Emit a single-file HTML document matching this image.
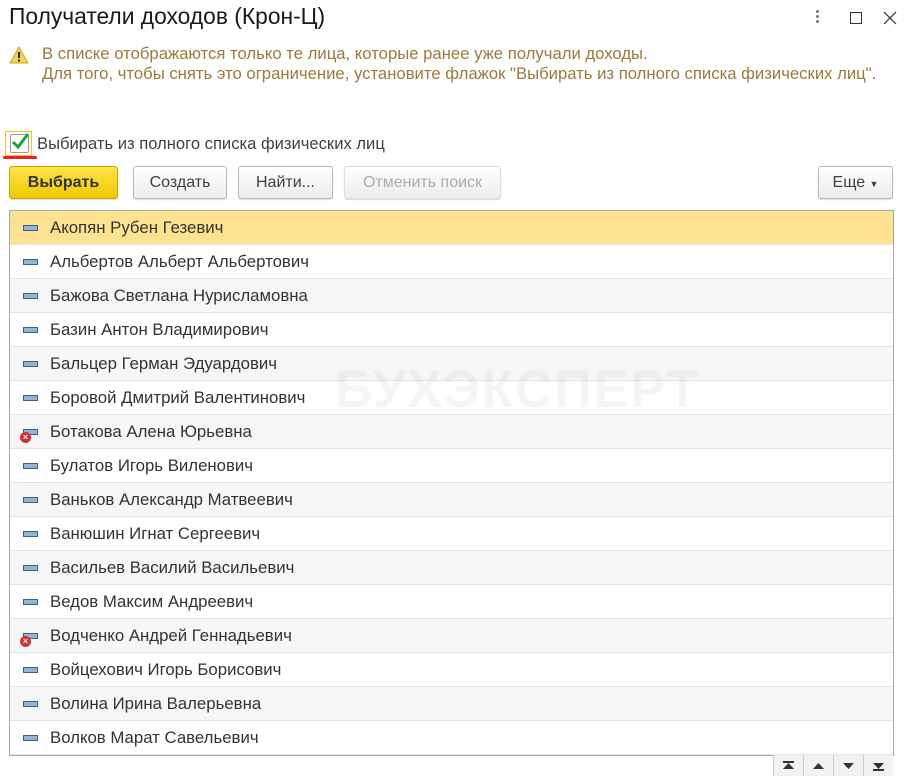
<!DOCTYPE html>
<html><head><meta charset="utf-8"><style>
body{margin:0;width:905px;height:776px;background:#fff;font-family:"Liberation Sans",Arial,sans-serif;position:relative;overflow:hidden;color:#333}
.a{position:absolute}
.title{left:9px;top:3px;font-size:22.8px;color:#1a1a1a}
.warn{left:42px;top:44px;font-size:16.7px;color:#9b7a3c;line-height:20px;white-space:nowrap}
.btn{position:absolute;top:166px;height:31px;border:1px solid #b9b9b9;border-radius:3px;background:linear-gradient(#fff,#ececec);font-size:16px;line-height:31px;text-align:center;color:#404040;box-shadow:0 1px 1px rgba(0,0,0,.15)}
.tbl{left:9px;top:210px;width:883px;height:544px;border:1px solid #a8a8a8;overflow:hidden}
.row{height:33px;border-bottom:1px solid #e4e4e4;font-size:16.8px;line-height:33px;padding-left:40px;position:relative;color:#333;white-space:nowrap}
.row:nth-child(odd){background:#f6f6f6}
.row.sel{background:#fde391}
.ic{position:absolute;left:13px;top:14px;width:13px;height:4px;background:#8fb6d9;border:1px solid #3d5f80}
.x{position:absolute;left:10px;top:17px;width:11px;height:11px;border-radius:50%;background:#d83030;color:#fff;font-size:9px;line-height:11px;text-align:center;font-weight:bold;font-style:normal}
.nav{position:absolute;top:755px;width:29px;height:21px;border-left:1px solid #ccc;background:#f2f2f2}
</style></head><body>
<div class="a title">Получатели доходов (Крон-Ц)</div>
<div class="a" style="left:816px;top:10px;width:3px">
<div style="width:3px;height:3px;background:#777;border-radius:50%;margin-bottom:2px"></div><div style="width:3px;height:3px;background:#777;border-radius:50%;margin-bottom:2px"></div><div style="width:3px;height:3px;background:#777;border-radius:50%"></div></div>
<div class="a" style="left:850px;top:12px;width:10px;height:10px;border:1px solid #333"></div>
<svg class="a" style="left:883px;top:11px" width="14" height="14"><path d="M1 1L13 13M13 1L1 13" stroke="#333" stroke-width="1.2"/></svg>
<svg class="a" style="left:9px;top:46px" width="20" height="18"><path d="M10 1L19 17H1Z" fill="#f3d44a" stroke="#c9a82a"/><rect x="9" y="6" width="2" height="6" fill="#222"/><rect x="9" y="13.5" width="2" height="2" fill="#222"/></svg>
<div class="a warn">В списке отображаются только те лица, которые ранее уже получали доходы.<br>Для того, чтобы снять это ограничение, установите флажок "Выбирать из полного списка физических лиц".</div>
<div class="a" style="left:5px;top:131px;width:27px;height:25px;border:1px solid #f3c31c;box-sizing:border-box"></div>
<div class="a" style="left:10px;top:134px;width:17px;height:17px;border:1px solid #999;border-radius:2px;background:#fff"></div>
<svg class="a" style="left:10px;top:131px" width="22" height="20"><path d="M3 11L8 16L18 3" stroke="#14a53c" stroke-width="3" fill="none"/></svg>
<div class="a" style="left:3px;top:156px;width:34px;height:3px;background:#e8202a;border-radius:2px"></div>
<div class="a" style="left:37px;top:134px;font-size:16.6px;color:#404040;white-space:nowrap">Выбирать из полного списка физических лиц</div>
<div class="btn" style="left:9px;width:107px;background:linear-gradient(#fbe34a,#f0c900);border-color:#c9a800;font-weight:bold;color:#333">Выбрать</div>
<div class="btn" style="left:133px;width:92px">Создать</div>
<div class="btn" style="left:238px;width:93px">Найти...</div>
<div class="btn" style="left:344px;width:155px;color:#aaa;border-color:#ddd">Отменить поиск</div>
<div class="btn" style="left:818px;width:73px">Еще <span style="font-size:9px">▼</span></div>
<div class="a tbl">
<div class="row sel"><i class="ic"></i>Акопян Рубен Гезевич</div>
<div class="row"><i class="ic"></i>Альбертов Альберт Альбертович</div>
<div class="row"><i class="ic"></i>Бажова Светлана Нурисламовна</div>
<div class="row"><i class="ic"></i>Базин Антон Владимирович</div>
<div class="row"><i class="ic"></i>Бальцер Герман Эдуардович</div>
<div class="row"><i class="ic"></i>Боровой Дмитрий Валентинович</div>
<div class="row"><i class="ic"></i><i class="x">×</i>Ботакова Алена Юрьевна</div>
<div class="row"><i class="ic"></i>Булатов Игорь Виленович</div>
<div class="row"><i class="ic"></i>Ваньков Александр Матвеевич</div>
<div class="row"><i class="ic"></i>Ванюшин Игнат Сергеевич</div>
<div class="row"><i class="ic"></i>Васильев Василий Васильевич</div>
<div class="row"><i class="ic"></i>Ведов Максим Андреевич</div>
<div class="row"><i class="ic"></i><i class="x">×</i>Водченко Андрей Геннадьевич</div>
<div class="row"><i class="ic"></i>Войцехович Игорь Борисович</div>
<div class="row"><i class="ic"></i>Волина Ирина Валерьевна</div>
<div class="row"><i class="ic"></i>Волков Марат Савельевич</div>
</div>
<div class="a" style="left:335px;top:360px;font-size:52px;font-weight:bold;color:rgba(0,0,0,.04);letter-spacing:2px">БУХЭКСПЕРТ</div>
<div class="nav" style="left:773px"><svg width="29" height="21"><rect x="9" y="6" width="11" height="2" fill="#333"/><path d="M9 14L14.5 8L20 14Z" fill="#333"/></svg></div>
<div class="nav" style="left:803px"><svg width="29" height="21"><path d="M9 14L14.5 8L20 14Z" fill="#333"/></svg></div>
<div class="nav" style="left:833px"><svg width="29" height="21"><path d="M9 8L14.5 14L20 8Z" fill="#333"/></svg></div>
<div class="nav" style="left:863px"><svg width="29" height="21"><path d="M9 8L14.5 14L20 8Z" fill="#333"/><rect x="9" y="14" width="11" height="2" fill="#333"/></svg></div>
</body></html>
